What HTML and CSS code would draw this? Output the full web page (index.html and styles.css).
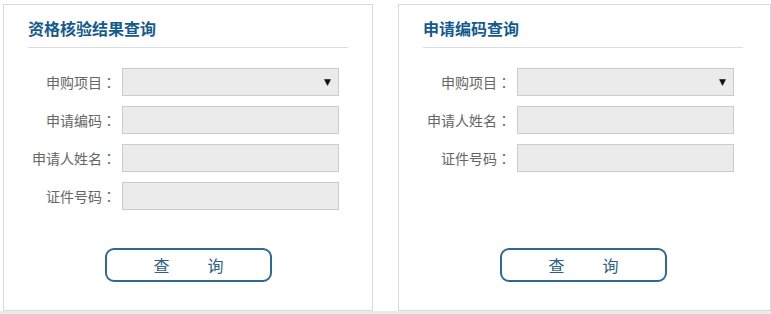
FILE: index.html
```html
<!DOCTYPE html>
<html lang="zh-CN">
<head>
<meta charset="utf-8">
<title>查询</title>
<link rel="stylesheet" href="styles.css">
</head>
<body>
<div class="page">
  <div class="panel panel-left">
    <h2 class="panel-title">资格核验结果查询</h2>
    <div class="form">
      <div class="row">
        <label class="label">申购项目<span class="colon" lang="zh-TW">：</span></label>
        <div class="field select"><span class="arrow">▼</span></div>
      </div>
      <div class="row">
        <label class="label">申请编码<span class="colon" lang="zh-TW">：</span></label>
        <div class="field"></div>
      </div>
      <div class="row">
        <label class="label">申请人姓名<span class="colon" lang="zh-TW">：</span></label>
        <div class="field"></div>
      </div>
      <div class="row">
        <label class="label">证件号码<span class="colon" lang="zh-TW">：</span></label>
        <div class="field"></div>
      </div>
    </div>
    <button class="btn"><span>查</span><span>询</span></button>
  </div>
  <div class="panel panel-right">
    <h2 class="panel-title">申请编码查询</h2>
    <div class="form">
      <div class="row">
        <label class="label">申购项目<span class="colon" lang="zh-TW">：</span></label>
        <div class="field select"><span class="arrow">▼</span></div>
      </div>
      <div class="row">
        <label class="label">申请人姓名<span class="colon" lang="zh-TW">：</span></label>
        <div class="field"></div>
      </div>
      <div class="row">
        <label class="label">证件号码<span class="colon" lang="zh-TW">：</span></label>
        <div class="field"></div>
      </div>
    </div>
    <button class="btn"><span>查</span><span>询</span></button>
  </div>
</div>
</body>
</html>
```

FILE: styles.css
```css
html, body {
  margin: 0;
  padding: 0;
}
body {
  background: #ebebeb;
  font-family: "Noto Sans CJK SC", "Noto Sans", sans-serif;
}
.page {
  background: #ffffff;
  height: 311px;
  display: flex;
  align-items: flex-start;
  padding: 4px 0 0 3px;
  box-sizing: border-box;
  gap: 25px;
}
.panel {
  border: 1px solid #d9d9d9;
  height: 307px;
  box-sizing: border-box;
  padding: 12px 0 28px 24px;
  display: flex;
  flex-direction: column;
  background: #fff;
}
.panel-left { width: 370px; }
.panel-right { width: 373px; }
.panel-title {
  width: 320px;
  margin: 0;
  font-size: 16px;
  line-height: 22px;
  font-weight: bold;
  color: #135a8e;
  padding-bottom: 8px;
  border-bottom: 1px solid #dcdcdc;
}
.form {
  margin-top: 20px;
  display: flex;
  flex-direction: column;
  gap: 10px;
}
.row {
  display: flex;
  align-items: center;
  height: 28px;
}
.label {
  width: 88px;
  text-align: right;
  font-size: 14px;
  color: #666666;
  white-space: nowrap;
  margin-right: 6px;
}
.colon {
  font-family: "Noto Sans CJK TC", "Noto Sans CJK SC", sans-serif;
}
.field {
  width: 217px;
  height: 28px;
  box-sizing: border-box;
  border: 1px solid #cccccc;
  background: #ebebeb;
  position: relative;
}
.arrow {
  position: absolute;
  right: 7px;
  top: 7px;
  font-size: 9px;
  line-height: 12px;
  color: #111;
  font-family: "DejaVu Sans", sans-serif;
}
.btn {
  margin-top: auto;
  margin-left: 77px;
  align-self: flex-start;
  width: 167px;
  height: 34px;
  box-sizing: border-box;
  border: 2px solid #2f6891;
  border-radius: 9px;
  background: #fff;
  display: flex;
  justify-content: center;
  align-items: center;
  gap: 38px;
  padding: 0;
  font-family: "Noto Sans CJK SC", "Noto Sans", sans-serif;
  font-size: 16px;
  color: #2c6288;
}
```
